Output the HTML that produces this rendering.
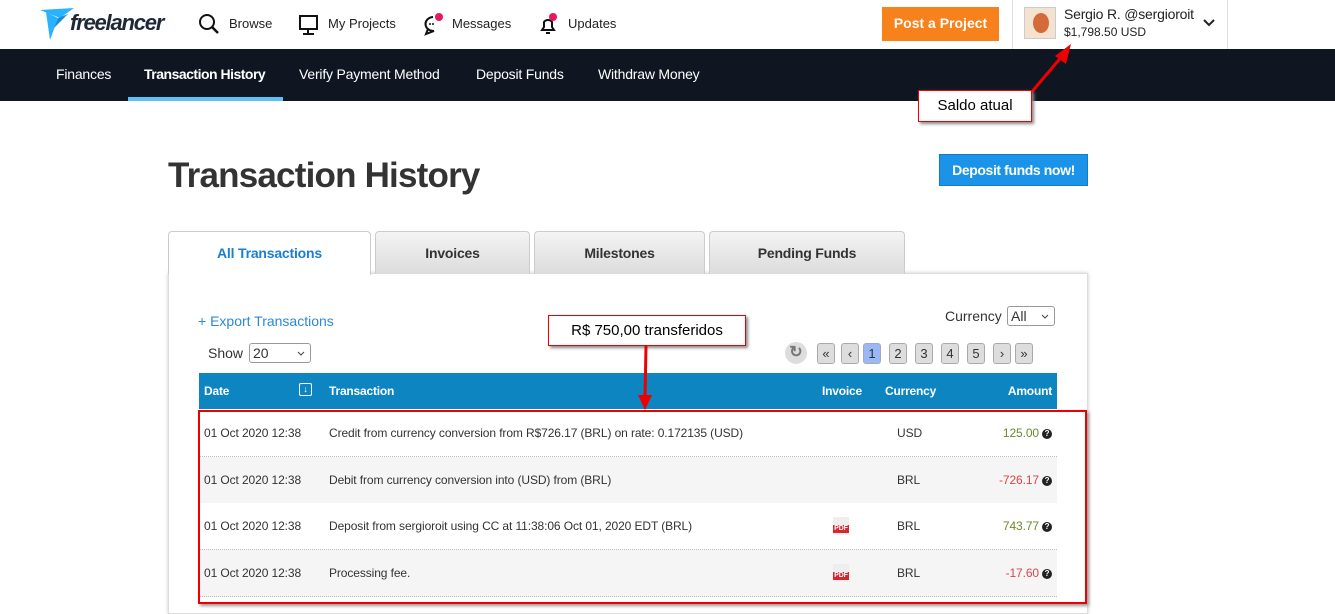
<!DOCTYPE html>
<html><head><meta charset="utf-8"><style>
*{box-sizing:border-box;margin:0;padding:0}
body{width:1335px;height:614px;overflow:hidden;background:#fff;font-family:"Liberation Sans",Arial,sans-serif;position:relative;color:#333}
.abs{position:absolute}
.top{left:0;top:0;width:1335px;height:49px;background:#fff}
.nav{left:0;top:49px;width:1335px;height:52px;background:#0f1621}
.nav span{position:absolute;top:17px;color:#fff;font-size:14px;letter-spacing:-0.2px}
.t{font-size:13px;color:#222}
.tab{position:absolute;top:231px;height:43px;background:linear-gradient(#f4f4f4,#dcdcdc);border:1px solid #ccc;border-bottom:none;border-radius:4px 4px 0 0;font-weight:bold;font-size:14px;color:#333;text-align:center;line-height:42px;letter-spacing:-0.2px}
.pg{position:absolute;top:343px;width:18px;height:21px;background:#ddd;border:1px solid #aaa;border-radius:3px;font-size:13px;text-align:center;line-height:19px;color:#333}
.row{position:absolute;left:199px;width:858px;height:47px;border-bottom:1px dotted #bbb;font-size:12px;color:#333;letter-spacing:-0.1px}
.row span{position:absolute;top:16px}
.q{display:inline-block;width:10px;height:10px;border-radius:50%;background:#222;color:#fff;font-size:8px;text-align:center;line-height:10px;font-weight:bold;vertical-align:1px;margin-left:3px;font-style:normal}
.pdf{position:absolute;left:634px;top:14px;width:16px;height:18px;background:#eee}
.pdf:after{content:"PDF";position:absolute;left:0;bottom:2px;width:16px;height:8px;background:#d9252d;color:#fff;font-size:7px;font-weight:bold;line-height:8px;text-align:center}
.note{position:absolute;background:#fff;border:1px solid #e00;box-shadow:2px 2px 3px #888;font-size:15px;color:#000;text-align:center}
</style></head><body>
<div class="abs top"></div>
<svg class="abs" style="left:40px;top:8px" width="36" height="34" viewBox="0 0 36 34"><path d="M0 2 L34 0 L20 10 Z" fill="#29b2fe"/><path d="M6 4 L18 10 L10 32 Z" fill="#29b2fe"/><path d="M18 10 L28 6 L14 20 Z" fill="#1a8fd8"/></svg>
<div class="abs" style="left:70px;top:10px;font-size:22px;font-weight:bold;font-style:italic;color:#1f2836;letter-spacing:-1.2px">freelancer</div>
<svg class="abs" style="left:198px;top:13px" width="22" height="22"><circle cx="9" cy="9" r="7" fill="none" stroke="#111" stroke-width="2"/><path d="M14 14 L20 20" stroke="#111" stroke-width="2.5"/></svg>
<div class="abs t" style="left:229px;top:16px">Browse</div>
<svg class="abs" style="left:298px;top:14px" width="22" height="22"><rect x="2" y="2" width="17" height="13" fill="none" stroke="#111" stroke-width="2"/><path d="M10 15v4M5 20h11" stroke="#111" stroke-width="2"/></svg>
<div class="abs t" style="left:328px;top:16px">My Projects</div>
<svg class="abs" style="left:421px;top:12px" width="24" height="24"><path d="M12 5a8 7 0 1 0 1 14l-8 3 2-5a8 7 0 0 1 5-12z" fill="none" stroke="#111" stroke-width="2"/><circle cx="9" cy="12" r="1" fill="#111"/><circle cx="12" cy="12" r="1" fill="#111"/><circle cx="18" cy="5" r="4" fill="#e8185b"/></svg>
<div class="abs t" style="left:452px;top:16px">Messages</div>
<svg class="abs" style="left:538px;top:12px" width="22" height="24"><path d="M4 18h12l-2-3v-5a5 5 0 0 0-8 0v5z" fill="none" stroke="#111" stroke-width="2"/><path d="M8 21h4" stroke="#111" stroke-width="2"/><circle cx="15" cy="5" r="4" fill="#e8185b"/></svg>
<div class="abs t" style="left:568px;top:16px">Updates</div>
<div class="abs" style="left:882px;top:7px;width:117px;height:34px;background:#f7821b;color:#fff;font-weight:bold;font-size:14px;text-align:center;line-height:33px">Post a Project</div>
<div class="abs" style="left:1012px;top:0;width:1px;height:49px;background:#ddd"></div>
<div class="abs" style="left:1227px;top:0;width:1px;height:49px;background:#ddd"></div>
<div class="abs" style="left:1024px;top:7px;width:32px;height:32px;border:1px solid #ccc;background:#f3e2d0"><div style="margin:5px 8px;width:16px;height:20px;border-radius:50%;background:#d46a3a"></div></div>
<div class="abs" style="left:1064px;top:6px;font-size:14px;color:#222;letter-spacing:-0.2px">Sergio R. @sergioroit</div>
<div class="abs" style="left:1064px;top:25px;font-size:12px;color:#222">$1,798.50 USD</div>
<svg class="abs" style="left:1203px;top:19px" width="12" height="8"><path d="M1 1 L6 6 L11 1" fill="none" stroke="#222" stroke-width="2"/></svg>
<div class="abs nav">
<span style="left:56px">Finances</span>
<span style="left:144px;font-weight:bold;letter-spacing:-0.5px">Transaction History</span>
<span style="left:299px">Verify Payment Method</span>
<span style="left:476px">Deposit Funds</span>
<span style="left:598px">Withdraw Money</span>
<div class="abs" style="left:128px;top:48px;width:155px;height:4px;background:#5dc1f5"></div>
</div>
<div class="abs" style="left:168px;top:156px;font-size:35px;font-weight:bold;color:#333;letter-spacing:-0.8px">Transaction History</div>
<div class="abs" style="left:939px;top:154px;width:149px;height:32px;background:#1a93e8;color:#fff;font-weight:bold;font-size:14px;text-align:center;line-height:31px;border:1px solid #127cc4;letter-spacing:-0.4px">Deposit funds now!</div>
<div class="abs" style="left:168px;top:273px;width:920px;height:341px;background:#fff;border:1px solid #ddd;box-shadow:0 0 4px #ccc"></div>
<div class="tab" style="left:168px;width:203px;background:#fff;height:44px;color:#1a7fd0">All Transactions</div>
<div class="tab" style="left:375px;width:155px">Invoices</div>
<div class="tab" style="left:534px;width:171px">Milestones</div>
<div class="tab" style="left:709px;width:196px">Pending Funds</div>
<div class="abs" style="left:198px;top:313px;font-size:14px;color:#2a8ad4">+ Export Transactions</div>
<div class="abs" style="left:208px;top:345px;font-size:14px">Show</div>
<div class="abs" style="left:249px;top:343px;width:62px;height:20px;border:1px solid #999;border-radius:3px;font-size:14px;padding-left:3px;line-height:18px">20<svg style="position:absolute;right:5px;top:7px" width="8" height="5"><path d="M1 1L4 4L7 1" fill="none" stroke="#444"/></svg></div>
<div class="abs" style="left:945px;top:308px;font-size:14px">Currency</div>
<div class="abs" style="left:1007px;top:306px;width:48px;height:20px;border:1px solid #999;border-radius:3px;font-size:14px;padding-left:3px;line-height:18px">All<svg style="position:absolute;right:5px;top:7px" width="8" height="5"><path d="M1 1L4 4L7 1" fill="none" stroke="#444"/></svg></div>
<div class="abs" style="left:785px;top:342px;width:22px;height:22px;border-radius:50%;background:#ddd;color:#777;font-size:16px;font-weight:bold;text-align:center;line-height:22px">&#8635;</div>
<div class="pg" style="left:817px">«</div><div class="pg" style="left:841px">‹</div>
<div class="pg" style="left:863px;background:#9ab8f8">1</div><div class="pg" style="left:889px">2</div><div class="pg" style="left:915px">3</div><div class="pg" style="left:941px">4</div><div class="pg" style="left:967px">5</div>
<div class="pg" style="left:993px">›</div><div class="pg" style="left:1015px">»</div>
<div class="abs" style="left:199px;top:373px;width:858px;height:36px;background:#0d85c0;color:#fff;font-weight:bold;font-size:12px;letter-spacing:-0.2px">
<span class="abs" style="left:5px;top:11px">Date</span>
<span class="abs" style="left:100px;top:10px;width:13px;height:13px;border:1px solid #fff;border-radius:2px;font-size:9px;text-align:center;line-height:11px">&#8595;</span>
<span class="abs" style="left:130px;top:11px">Transaction</span>
<span class="abs" style="left:623px;top:11px">Invoice</span>
<span class="abs" style="left:686px;top:11px">Currency</span>
<span class="abs" style="right:5px;top:11px">Amount</span>
</div>
<div class="row" style="top:410px;background:#fff"><span style="left:5px">01 Oct 2020 12:38</span><span style="left:130px">Credit from currency conversion from R$726.17 (BRL) on rate: 0.172135 (USD)</span><span style="left:698px">USD</span><span style="right:5px;color:#6b8a2a">125.00<i class="q">?</i></span></div>
<div class="row" style="top:457px;background:#f5f5f5"><span style="left:5px">01 Oct 2020 12:38</span><span style="left:130px">Debit from currency conversion into (USD) from (BRL)</span><span style="left:698px">BRL</span><span style="right:5px;color:#d44">-726.17<i class="q">?</i></span></div>
<div class="row" style="top:503px;background:#fff"><span style="left:5px">01 Oct 2020 12:38</span><span style="left:130px">Deposit from sergioroit using CC at 11:38:06 Oct 01, 2020 EDT (BRL)</span><div class="pdf"></div><span style="left:698px">BRL</span><span style="right:5px;color:#6b8a2a">743.77<i class="q">?</i></span></div>
<div class="row" style="top:550px;background:#f5f5f5"><span style="left:5px">01 Oct 2020 12:38</span><span style="left:130px">Processing fee.</span><div class="pdf"></div><span style="left:698px">BRL</span><span style="right:5px;color:#d44">-17.60<i class="q">?</i></span></div>
<div class="abs" style="left:198px;top:410px;width:889px;height:194px;border:2px solid #e00;box-shadow:2px 2px 3px #999"></div>
<div class="note" style="left:548px;top:315px;width:198px;height:31px;line-height:29px">R$ 750,00 transferidos</div>
<svg class="abs" style="left:0;top:0" width="1335" height="614"><path d="M646 346 L645 398" stroke="#e00" stroke-width="3"/><path d="M638 395 L645 410 L652 395 Z" fill="#e00"/><path d="M1030 94 L1063 55" stroke="#e00" stroke-width="3"/><path d="M1055 56 L1071 44 L1066 64 Z" fill="#e00"/></svg>
<div class="note" style="left:918px;top:90px;width:114px;height:32px;line-height:30px">Saldo atual</div>
</body></html>
